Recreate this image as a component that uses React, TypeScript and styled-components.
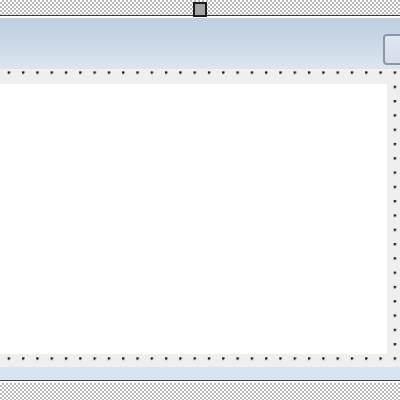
import React from "react";
import styled, { createGlobalStyle } from "styled-components";

const Global = createGlobalStyle`
  html, body { margin: 0; padding: 0; background: #ffffff; }
  body { font-family: "Liberation Sans", Arial, sans-serif; }
`;

const Frame = styled.div`
  position: relative;
  width: 400px;
  height: 400px;
  display: flex;
  flex-direction: column;
  overflow: hidden;
  background: #ffffff;
`;

const Hatch = styled.div<{ $h: number }>`
  height: ${(p) => p.$h}px;
  flex: none;
  background-color: #ffffff;
  background-image:
    linear-gradient(45deg, #b8b8b8 25%, transparent 25%, transparent 75%, #b8b8b8 75%),
    linear-gradient(45deg, #b8b8b8 25%, transparent 25%, transparent 75%, #b8b8b8 75%);
  background-size: 4px 4px;
  background-position: 0 0, 2px 2px;
`;

const Rule = styled.div`
  flex: none;
  height: 1px;
  background: #3a3a3a;
  border-bottom: 2px solid #ffffff;
`;

const Header = styled.div`
  flex: none;
  height: 51px;
  display: flex;
  justify-content: flex-end;
  align-items: flex-start;
  padding-top: 16px;
  box-sizing: border-box;
  background: linear-gradient(180deg, #bfcfdf 0%, #cbd8e6 50%, #dbe6f1 100%);
`;

const HeaderButton = styled.div`
  width: 30px;
  height: 31px;
  margin-right: -13px;
  box-sizing: border-box;
  border: 2px solid #8a96b0;
  border-radius: 4px;
  background: linear-gradient(180deg, #dfe7f0 0%, #d3dee9 100%);
`;

const Surface = styled.div`
  flex: none;
  height: 298px;
  box-sizing: border-box;
  padding: 15px 13px 13px 0;
  background-color: #efefef;
  background-image: radial-gradient(circle at 1px 1px, #1a1a1a 1.25px, transparent 1.7px);
  background-size: 14.3px 14.3px;
  background-position: 7.7px 2.4px;
`;

const Canvas = styled.div`
  width: 100%;
  height: 100%;
  background: #ffffff;
`;

const Footer = styled.div`
  flex: none;
  height: 13px;
  background: #d7e4f2;
`;

const Handle = styled.div`
  position: absolute;
  left: 193px;
  top: 2px;
  width: 14px;
  height: 15px;
  box-sizing: border-box;
  border: 2px solid #1c1c1c;
  background: #a3a3a3;
`;

export default function App() {
  return (
    <>
      <Global />
      <Frame>
        <Hatch $h={15} />
        <Rule />
        <Header>
          <HeaderButton />
        </Header>
        <Surface>
          <Canvas />
        </Surface>
        <Footer />
        <Rule />
        <Hatch $h={17} />
        <Handle />
      </Frame>
    </>
  );
}
